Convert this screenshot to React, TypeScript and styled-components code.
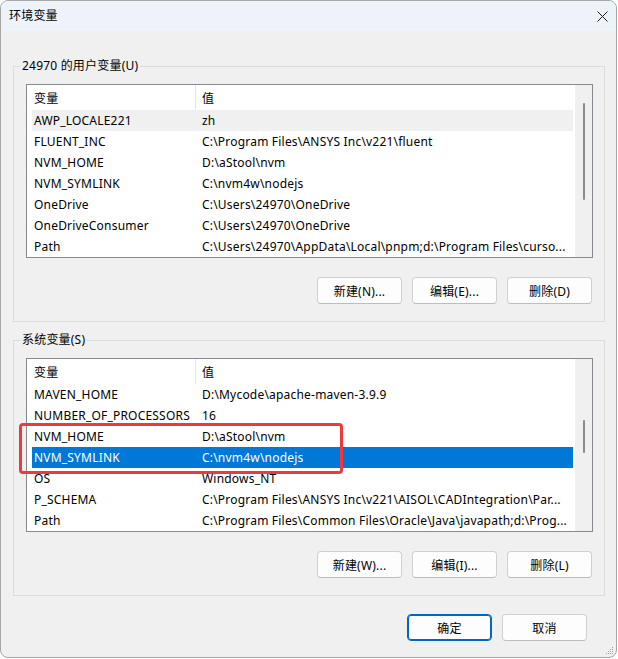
import React from "react";
import styled, { createGlobalStyle } from "styled-components";

const FONT = `"Noto Sans", "Noto Sans CJK SC", sans-serif`;

const GlobalStyle = createGlobalStyle`
  html, body { margin: 0; padding: 0; background: #ffffff; }
  body { font-family: ${FONT}; font-size: 12px; color: #000; }
  * { box-sizing: border-box; }
`;

const Window = styled.div`
  position: relative;
  width: 617px;
  height: 658px;
  border: 1px solid #a6a6a6;
  border-radius: 8px;
  overflow: hidden;
  display: flex;
  flex-direction: column;
  background: #f0f0f0;
  font-family: ${FONT};
  font-size: 12px;
  letter-spacing: 0.2px;
`;

const TitleBar = styled.div`
  flex: none;
  height: 30px;
  background: #eef2f9;
  display: flex;
  align-items: center;
  justify-content: space-between;
  padding: 0 8px 0 8px;
`;

const Title = styled.span`
  font-size: 12px;
  line-height: 16px;
  color: #000;
`;

const CloseButton = styled.div`
  width: 12px;
  height: 12px;
  display: flex;
  align-items: center;
  justify-content: center;
`;

const Body = styled.div`
  flex: 1;
  display: flex;
  flex-direction: column;
  padding: 27px 11px 0 12px;
`;

const GroupBox = styled.fieldset<{ $gap?: number }>`
  position: relative;
  margin: ${(p) => p.$gap ?? 0}px 0 0 0;
  padding: 10px 11px 17px 12px;
  border: 1px solid #dcdcdc;
  min-width: 0;
`;

const Legend = styled.legend`
  margin-left: -6px;
  padding: 0 2px;
  font-size: 12px;
  line-height: 16px;
  color: #000;
`;

const ListView = styled.div`
  position: relative;
  height: 174px;
  border: 1px solid #868a91;
  background: #ffffff;
  display: flex;
`;

const ListContent = styled.div`
  flex: 1;
  min-width: 0;
  display: flex;
  flex-direction: column;
  overflow: hidden;
`;

const Header = styled.div`
  flex: none;
  height: 25px;
  display: flex;
  align-items: stretch;
`;

const HeaderCell = styled.div<{ $first?: boolean }>`
  display: flex;
  align-items: center;
  padding-left: ${(p) => (p.$first ? 7 : 6)}px;
  width: ${(p) => (p.$first ? "169px" : "auto")};
  flex: ${(p) => (p.$first ? "none" : "1")};
  border-right: ${(p) => (p.$first ? "1px solid #e5e5e5" : "none")};
  color: #000;
`;

const Rows = styled.div`
  padding-left: 5px;
  display: flex;
  flex-direction: column;
`;

type RowState = "normal" | "hover" | "selected";

const Row = styled.div<{ $state: RowState }>`
  height: 21px;
  display: grid;
  grid-template-columns: 168px 1fr;
  align-items: center;
  background: ${(p) =>
    p.$state === "selected" ? "#0078d7" : p.$state === "hover" ? "#f0f0f0" : "transparent"};
  color: ${(p) => (p.$state === "selected" ? "#ffffff" : "#000000")};
`;

const Cell = styled.span`
  padding-left: 2px;
  white-space: nowrap;
  overflow: hidden;
  line-height: 16px;
`;

const ScrollTrack = styled.div`
  flex: none;
  width: 17px;
  margin-left: 2px;
  background: #f0f0f0;
  display: flex;
  flex-direction: column;
  align-items: center;
`;

const Thumb = styled.div<{ $offset: number; $length: number }>`
  width: 2px;
  margin-top: ${(p) => p.$offset}px;
  height: ${(p) => p.$length}px;
  background: #8b8b8b;
  border-radius: 1px;
`;

const ButtonRow = styled.div<{ $gapTop: number; $right: number }>`
  display: flex;
  justify-content: flex-end;
  gap: 10px;
  margin-top: ${(p) => p.$gapTop}px;
  padding-right: ${(p) => p.$right}px;
`;

const Button = styled.button<{ $default?: boolean }>`
  width: 85px;
  height: 27px;
  padding: 0;
  border-radius: 4px;
  background: #fdfdfd;
  border: 1px solid ${(p) => (p.$default ? "#0067c0" : "#d0d0d0")};
  border-bottom-color: ${(p) => (p.$default ? "#0067c0" : "#bdbdbd")};
  box-shadow: ${(p) => (p.$default ? "inset 0 0 0 1px #0067c0" : "none")};
  font-family: ${FONT};
  font-size: 12px;
  letter-spacing: 0.2px;
  color: #000;
`;

const Annotation = styled.div`
  position: absolute;
  left: -8px;
  top: 64px;
  width: 324px;
  height: 51px;
  border: 3px solid #ec3b3f;
  border-radius: 4px;
  pointer-events: none;
`;

const Grip = styled.svg`
  position: absolute;
  right: 2px;
  bottom: 2px;
`;

type Variable = { name: string; value: string; state?: RowState };

const userVars: Variable[] = [
  { name: "AWP_LOCALE221", value: "zh", state: "hover" },
  { name: "FLUENT_INC", value: "C:\\Program Files\\ANSYS Inc\\v221\\fluent" },
  { name: "NVM_HOME", value: "D:\\aStool\\nvm" },
  { name: "NVM_SYMLINK", value: "C:\\nvm4w\\nodejs" },
  { name: "OneDrive", value: "C:\\Users\\24970\\OneDrive" },
  { name: "OneDriveConsumer", value: "C:\\Users\\24970\\OneDrive" },
  { name: "Path", value: "C:\\Users\\24970\\AppData\\Local\\pnpm;d:\\Program Files\\curso..." },
];

const systemVars: Variable[] = [
  { name: "MAVEN_HOME", value: "D:\\Mycode\\apache-maven-3.9.9" },
  { name: "NUMBER_OF_PROCESSORS", value: "16" },
  { name: "NVM_HOME", value: "D:\\aStool\\nvm" },
  { name: "NVM_SYMLINK", value: "C:\\nvm4w\\nodejs", state: "selected" },
  { name: "OS", value: "Windows_NT" },
  { name: "P_SCHEMA", value: "C:\\Program Files\\ANSYS Inc\\v221\\AISOL\\CADIntegration\\Par..." },
  { name: "Path", value: "C:\\Program Files\\Common Files\\Oracle\\Java\\javapath;d:\\Prog..." },
];

function VarList({
  vars,
  thumbOffset,
  thumbLength,
  children,
}: {
  vars: Variable[];
  thumbOffset: number;
  thumbLength: number;
  children?: React.ReactNode;
}) {
  return (
    <ListView>
      <ListContent>
        <Header>
          <HeaderCell $first>变量</HeaderCell>
          <HeaderCell>值</HeaderCell>
        </Header>
        <Rows>
          {vars.map((v) => (
            <Row key={v.name} $state={v.state ?? "normal"}>
              <Cell>{v.name}</Cell>
              <Cell>{v.value}</Cell>
            </Row>
          ))}
        </Rows>
      </ListContent>
      <ScrollTrack>
        <Thumb $offset={thumbOffset} $length={thumbLength} />
      </ScrollTrack>
      {children}
    </ListView>
  );
}

export default function App() {
  return (
    <>
      <GlobalStyle />
      <Window>
        <TitleBar>
          <Title>环境变量</Title>
          <CloseButton>
            <svg width="11" height="11" viewBox="0 0 11 11">
              <path d="M0.5 0.5 L10.5 10.5 M10.5 0.5 L0.5 10.5" stroke="#1b1b1b" strokeWidth="1" />
            </svg>
          </CloseButton>
        </TitleBar>
        <Body>
          <GroupBox>
            <Legend>24970 的用户变量(U)</Legend>
            <VarList vars={userVars} thumbOffset={18} thumbLength={97} />
            <ButtonRow $gapTop={19} $right={1}>
              <Button>新建(N)...</Button>
              <Button>编辑(E)...</Button>
              <Button>删除(D)</Button>
            </ButtonRow>
          </GroupBox>
          <GroupBox $gap={10}>
            <Legend>系统变量(S)</Legend>
            <VarList vars={systemVars} thumbOffset={61} thumbLength={33}>
              <Annotation />
            </VarList>
            <ButtonRow $gapTop={19} $right={1}>
              <Button>新建(W)...</Button>
              <Button>编辑(I)...</Button>
              <Button>删除(L)</Button>
            </ButtonRow>
          </GroupBox>
          <ButtonRow $gapTop={18} $right={18}>
            <Button $default>确定</Button>
            <Button>取消</Button>
          </ButtonRow>
        </Body>
        <Grip width="8" height="8" viewBox="0 0 8 8">
          <rect x="6" y="0" width="1" height="1" fill="#a0a0a0" />
          <rect x="4" y="2" width="1" height="1" fill="#a0a0a0" />
          <rect x="6" y="2" width="1" height="1" fill="#a0a0a0" />
          <rect x="2" y="4" width="1" height="1" fill="#a0a0a0" />
          <rect x="4" y="4" width="1" height="1" fill="#a0a0a0" />
          <rect x="6" y="4" width="1" height="1" fill="#a0a0a0" />
          <rect x="0" y="6" width="1" height="1" fill="#a0a0a0" />
          <rect x="2" y="6" width="1" height="1" fill="#a0a0a0" />
          <rect x="4" y="6" width="1" height="1" fill="#a0a0a0" />
          <rect x="6" y="6" width="1" height="1" fill="#a0a0a0" />
        </Grip>
      </Window>
    </>
  );
}
